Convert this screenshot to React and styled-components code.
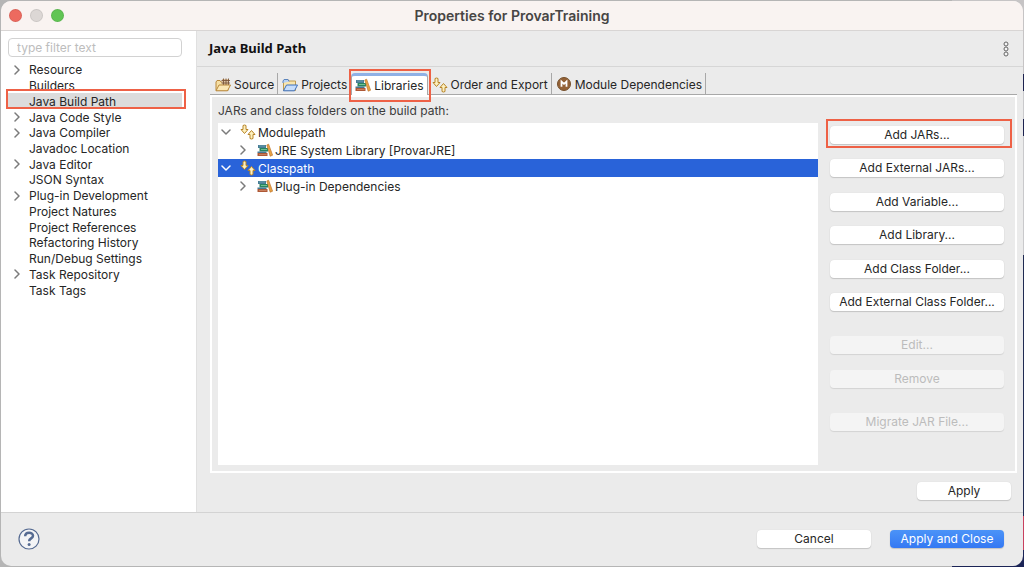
import React from 'react';
import styled, { createGlobalStyle, css } from 'styled-components';

const GlobalStyle = createGlobalStyle`
  *, *::before, *::after {
    box-sizing: border-box;
  }

  body {
    margin: 0;
    font-family: Inter, "Liberation Sans", sans-serif;
    font-size: 12px;
    line-height: 15px;
    color: #262626;
  }

  button, input {
    font: inherit;
    color: inherit;
  }
`;

const Desktop = styled.div`
  display: flex;
  min-height: 100vh;
  padding: 1px;
  background: linear-gradient(to right, #b5b5b5 0 93%, transparent 93%),
    linear-gradient(#c6c4c5 0 13%, #1d2350 13% 16%, #c9c9cb 16% 21%, #1d2350 21% 24%, #c9c9cb 24% 45%, #1f2a52 45% 91%, #c8405f 91% 97%, #1b2456 97%);
`;

const Window = styled.main`
  flex: 1;
  min-width: 0;
  display: flex;
  flex-direction: column;
  border-radius: 10px;
  overflow: hidden;
  background: #ebebeb;
`;

const TitleBar = styled.header`
  display: grid;
  grid-template-columns: 1fr auto 1fr;
  align-items: center;
  height: 30px;
  padding: 0 8px;
  background: #f9f3f1;
  border-bottom: 1px solid #d8d5d4;
`;

const Lights = styled.div`
  display: flex;
  gap: 8px;
`;

const Light = styled.button`
  width: 13px;
  height: 13px;
  padding: 0;
  border: 1px solid rgba(0, 0, 0, .08);
  border-radius: 50%;
  background: ${props => props.$color};
`;

const WindowTitle = styled.h1`
  margin: 0;
  font-size: 14px;
  font-weight: 600;
  color: #474544;
`;

const Body = styled.div`
  flex: 1;
  display: flex;
`;

const Sidebar = styled.nav`
  flex: 0 0 195px;
  padding: 7px 14px 0 7px;
  background: #fff;
`;

const Filter = styled.input`
  display: block;
  width: 100%;
  height: 19px;
  padding: 0 8px;
  border: 1px solid #d2d2d2;
  border-radius: 4px;
  background: #fff;
  outline: none;

  &::placeholder {
    color: #bdbdbd;
    opacity: 1;
  }
`;

const Categories = styled.ul`
  display: grid;
  grid-auto-rows: 1fr;
  height: 236px;
  margin: 5px 0 0;
  padding: 0;
  list-style: none;
`;

const Category = styled.li`
  position: relative;
  display: flex;
  align-items: center;
  gap: 7px;
  padding-left: 4px;
  background: ${props => (props.$selected ? '#dcdcdc' : 'transparent')};
`;

const Marker = styled.span`
  display: flex;
  justify-content: center;
  width: 10px;
  color: ${props => (props.$light ? '#fff' : '#7b7b7b')};
`;

const Highlight = styled.span`
  position: absolute;
  inset: ${props => props.$inset};
  border: 2px solid #ee6146;
  pointer-events: none;
  z-index: 1;
`;

const Page = styled.section`
  flex: 1;
  min-width: 0;
  display: flex;
  flex-direction: column;
  border-left: 1px solid #e0e0e0;
`;

const PageHeader = styled.div`
  display: flex;
  align-items: center;
  justify-content: space-between;
  height: 36px;
  padding: 0 13px 0 12px;
  border-bottom: 1px solid #d6d6d6;
`;

const PageTitle = styled.h2`
  margin: 0;
  font-family: "Noto Sans", sans-serif;
  font-size: 13px;
  font-weight: 700;
  color: #111;
`;

const MenuButton = styled.button`
  display: flex;
  padding: 0;
  border: 0;
  background: none;
`;

const Tabs = styled.div`
  display: flex;
  height: 28px;
  margin: 0 6px 0 13px;
  padding: 6px 0 0 1px;
  border-bottom: 1px solid #a8a8a8;
`;

const Tab = styled.button`
  position: relative;
  display: flex;
  align-items: center;
  gap: 3px;
  height: 21px;
  padding: 2px 3px 0 4px;
  border: 0;
  border-right: 1px solid ${props => (props.$divider ? '#a8a8a8' : 'transparent')};
  background: none;
  white-space: nowrap;

  ${props => props.$active && css`
    height: 22px;
    border: 1px solid #a8a8a8;
    border-top: 3px solid #8fb1e6;
    border-bottom: 0;
    border-radius: 4px 4px 0 0;
    padding: 0 3px 1px;
    background: #fff;
  `}
`;

const TabPanel = styled.div`
  flex: 1;
  display: flex;
  flex-direction: column;
  margin: 0 6px 0 13px;
  padding: 6px 11px 6px 6px;
  border: 2px solid #fff;
`;

const TreeLabel = styled.p`
  margin: 0 0 5px;
  color: #3c3c3c;
`;

const Columns = styled.div`
  flex: 1;
  display: flex;
  gap: 12px;
`;

const Tree = styled.ul`
  flex: 1;
  margin: 0;
  padding: 0;
  list-style: none;
  background: #fff;
`;

const TreeRow = styled.li`
  display: flex;
  align-items: center;
  height: 18px;
  padding-left: ${props => 3 + props.$level * 17}px;
  color: ${props => (props.$selected ? '#fff' : '#262626')};
  background: ${props => (props.$selected ? '#2963d9' : 'transparent')};
`;

const TreeIcon = styled.span`
  display: flex;
  margin: 0 2px 0 9px;
`;

const Actions = styled.div`
  flex: 0 0 174px;
  padding-top: 3px;
`;

const ActionGroup = styled.div`
  display: flex;
  flex-direction: column;
  justify-content: space-between;
  height: ${props => props.$height}px;
  margin-bottom: 25px;
`;

const ActionSlot = styled.div`
  position: relative;
  display: flex;
`;

const Button = styled.button`
  flex: ${props => (props.$wide ? '0 0 114px' : '1')};
  height: 18px;
  padding: 0;
  border: 0;
  border-radius: 4px;
  background: #fff;
  box-shadow: 0 1px 1px rgba(0, 0, 0, .16), 0 0 1px rgba(0, 0, 0, .12);
  line-height: 18px;

  &:disabled {
    color: #bcbcbc;
    background: #f4f4f4;
    box-shadow: 0 1px 1px rgba(0, 0, 0, .1);
  }

  ${props => props.$primary && css`
    color: #fff;
    background: linear-gradient(#4b93f8, #3478f3);
  `}
`;

const ApplyRow = styled.div`
  display: flex;
  justify-content: flex-end;
  padding: 9px 12px 12px;

  ${Button} {
    flex: 0 0 94px;
  }
`;

const Footer = styled.footer`
  display: flex;
  align-items: center;
  gap: 19px;
  height: 54px;
  padding: 0 19px 2px 17px;
  border-top: 1px solid #d3d3d3;
`;

const HelpButton = styled.button`
  display: flex;
  margin-right: auto;
  padding: 0;
  border: 0;
  background: none;
`;

const Chevron = ({ open }) => (
  <svg width="10" height="10" viewBox="0 0 10 10" fill="none" stroke="currentColor" strokeWidth="1.5" strokeLinecap="round" strokeLinejoin="round">
    <path d={open ? 'M1 3 5 7 9 3' : 'M3 1 7 5 3 9'} />
  </svg>
);

const SourceIcon = () => (
  <svg width="16" height="16" viewBox="0 0 16 16" strokeLinejoin="round">
    <path d="M1 13.5V5l1-1.5h3L6 5h7v8.5z" fill="#f6dfa4" stroke="#b8883c" />
    <path d="M7 2h7v6H7z" fill="#dcc3a2" />
    <path d="M6.5 3.5h8.500M6.500 6h8.500M8.500 1.500V8M11 1.500V8M13.500 1.500V8" stroke="#7c573a" strokeWidth=".9" />
    <path d="M1 13.8 4 8h11.5l-3 5.8z" fill="#fbe7b4" stroke="#b8883c" />
  </svg>
);

const ProjectsIcon = () => (
  <svg width="16" height="16" viewBox="0 0 16 16" strokeLinejoin="round">
    <path d="M1.500 13.500V4l1-1.500H6L7 4h6.500v9.500z" fill="#f8e5ae" stroke="#bd9a50" />
    <path d="M1 6V4l1-1.500h4L7 4.500" fill="#b7d1f4" stroke="#5b84bd" />
    <path d="M1.500 13.800 4.500 8h11l-3 5.800z" fill="#c6ddfb" stroke="#3d70bd" />
  </svg>
);

const LibraryIcon = () => (
  <svg width="16" height="16" viewBox="0 0 16 16">
    <path d="M1 3h8v3H1z" fill="#477e96" />
    <path d="M2 4h6" stroke="#75a2b1" strokeWidth=".8" />
    <path d="M2.500 6H11v3.500H2.500z" fill="#28865f" />
    <path d="M4 7.500h6" stroke="#71bf94" />
    <path d="M.5 9.500h9V11h-9z" fill="#467993" />
    <path d="M.5 11h10v3H.5z" fill="#ae5836" />
    <path d="M2 12.500h7.500" stroke="#d18c69" strokeWidth=".8" />
    <path d="m9.800 3 1.800-.8 4 11-2.400 1z" fill="#e9a344" stroke="#be752e" strokeWidth=".7" />
  </svg>
);

const OrderIcon = () => (
  <svg width="16" height="16" viewBox="0 0 16 16" fill="#fdf0bf" stroke="#b78428" strokeLinejoin="round">
    <path d="M3 1.500q1.500-1 3 0v4h2L4.500 9.500 1 5.500h2z" />
    <path d="M10 14.500v-4H8l3.500-4 3.500 4h-2v4q-1.500 1-3 0z" />
  </svg>
);

const ModuleIcon = () => (
  <svg width="16" height="16" viewBox="0 0 16 16">
    <circle cx="8" cy="7" r="6.500" fill="#946237" stroke="#75502c" />
    <path d="M5.500 9.800V4.500L8 6.800l2.500-2.300v5.300" fill="none" stroke="#fff" strokeWidth="1.800" />
  </svg>
);

const MenuDots = () => (
  <svg width="8" height="16" viewBox="0 0 8 16" fill="#f4f4f4" stroke="#666">
    <circle cx="4" cy="3" r="2" />
    <circle cx="4" cy="8" r="2" />
    <circle cx="4" cy="13" r="2" />
  </svg>
);

const HelpIcon = () => (
  <svg width="22" height="22" viewBox="0 0 22 22" fill="none" stroke="#566b92">
    <circle cx="11" cy="11" r="10" fill="#f3f4f6" strokeWidth="1.200" />
    <path d="M7.200 8.300C7.200 3.500 15 3.700 15 7.700c0 2.800-3.900 2.600-3.900 5.600" strokeWidth="2.500" />
    <circle cx="11.100" cy="16.500" r="1.500" fill="#566b92" stroke="none" />
  </svg>
);

const categories = [
  { name: 'Resource', parent: true },
  { name: 'Builders' },
  { name: 'Java Build Path', selected: true },
  { name: 'Java Code Style', parent: true },
  { name: 'Java Compiler', parent: true },
  { name: 'Javadoc Location' },
  { name: 'Java Editor', parent: true },
  { name: 'JSON Syntax' },
  { name: 'Plug-in Development', parent: true },
  { name: 'Project Natures' },
  { name: 'Project References' },
  { name: 'Refactoring History' },
  { name: 'Run/Debug Settings' },
  { name: 'Task Repository', parent: true },
  { name: 'Task Tags' },
];

const tabs = [
  { name: 'Source', Icon: SourceIcon, divider: true },
  { name: 'Projects', Icon: ProjectsIcon },
  { name: 'Libraries', Icon: LibraryIcon, active: true },
  { name: 'Order and Export', Icon: OrderIcon, divider: true },
  { name: 'Module Dependencies', Icon: ModuleIcon, divider: true },
];

const entries = [
  { name: 'Modulepath', Icon: OrderIcon, level: 0 },
  { name: 'JRE System Library [ProvarJRE]', Icon: LibraryIcon, level: 1 },
  { name: 'Classpath', Icon: OrderIcon, level: 0, selected: true },
  { name: 'Plug-in Dependencies', Icon: LibraryIcon, level: 1 },
];

const actionGroups = [
  {
    height: 185,
    names: ['Add JARs...', 'Add External JARs...', 'Add Variable...', 'Add Library...', 'Add Class Folder...', 'Add External Class Folder...'],
  },
  { height: 52, names: ['Edit...', 'Remove'], disabled: true },
  { height: 18, names: ['Migrate JAR File...'], disabled: true },
];

const App = () => (
  <>
    <GlobalStyle />
    <Desktop>
      <Window>
        <TitleBar>
          <Lights>
            <Light $color="#ed6a5f" aria-label="Close" />
            <Light $color="#dcd7d5" aria-label="Minimize" />
            <Light $color="#61c554" aria-label="Zoom" />
          </Lights>
          <WindowTitle>Properties for ProvarTraining</WindowTitle>
        </TitleBar>
        <Body>
          <Sidebar>
            <Filter type="text" placeholder="type filter text" aria-label="type filter text" />
            <Categories>
              {categories.map(({ name, parent, selected }) => (
                <Category key={name} $selected={selected}>
                  <Marker>{parent && <Chevron />}</Marker>
                  <span>{name}</span>
                  {selected && <Highlight $inset="-4px -4px 0 -2px" />}
                </Category>
              ))}
            </Categories>
          </Sidebar>
          <Page>
            <PageHeader>
              <PageTitle>Java Build Path</PageTitle>
              <MenuButton aria-label="Menu"><MenuDots /></MenuButton>
            </PageHeader>
            <Tabs role="tablist">
              {tabs.map(({ name, Icon, divider, active }) => (
                <Tab key={name} role="tab" aria-selected={!!active} $divider={divider} $active={active}>
                  <Icon />
                  <span>{name}</span>
                  {active && <Highlight $inset="-7px -4px -7px -3px" />}
                </Tab>
              ))}
            </Tabs>
            <TabPanel role="tabpanel">
              <TreeLabel>JARs and class folders on the build path:</TreeLabel>
              <Columns>
                <Tree>
                  {entries.map(({ name, Icon, level, selected }) => (
                    <TreeRow key={name} $level={level} $selected={selected}>
                      <Marker $light={selected}><Chevron open={level === 0} /></Marker>
                      <TreeIcon><Icon /></TreeIcon>
                      <span>{name}</span>
                    </TreeRow>
                  ))}
                </Tree>
                <Actions>
                  {actionGroups.map(({ height, names, disabled }) => (
                    <ActionGroup key={names[0]} $height={height}>
                      {names.map(name => (
                        <ActionSlot key={name}>
                          <Button disabled={disabled}>{name}</Button>
                          {name === 'Add JARs...' && <Highlight $inset="-7px -8px -4px -4px" />}
                        </ActionSlot>
                      ))}
                    </ActionGroup>
                  ))}
                </Actions>
              </Columns>
            </TabPanel>
            <ApplyRow>
              <Button>Apply</Button>
            </ApplyRow>
          </Page>
        </Body>
        <Footer>
          <HelpButton aria-label="Help"><HelpIcon /></HelpButton>
          <Button $wide>Cancel</Button>
          <Button $wide $primary>Apply and Close</Button>
        </Footer>
      </Window>
    </Desktop>
  </>
);

export default App;
